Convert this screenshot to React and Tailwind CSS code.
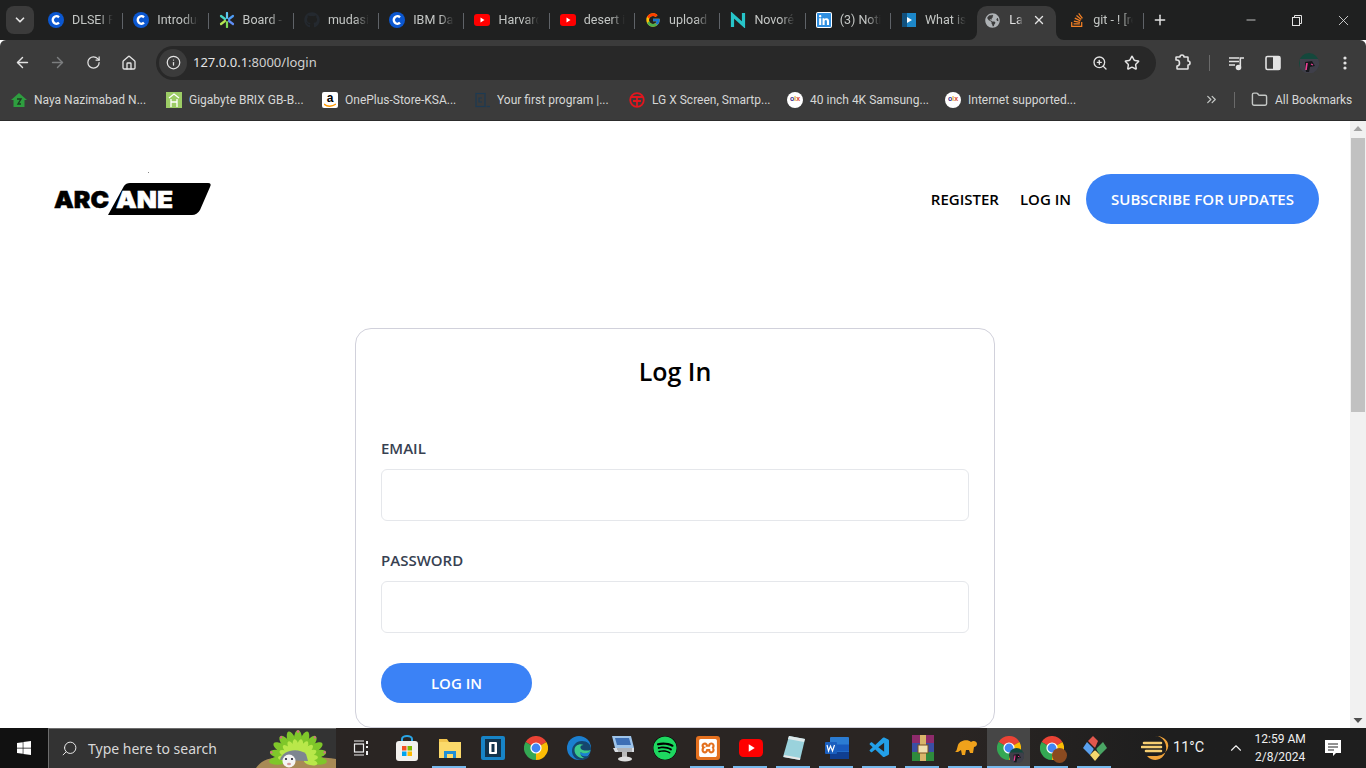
import React from "react";
import { ArrowLeft, ArrowRight, RotateCw, Home, Info, ZoomIn, Star, ChevronDown, X, Plus, Minus, ChevronsRight, Folder, Search, ChevronUp } from "lucide-react";
import { FcGoogle } from "react-icons/fc";
import { FaGithub, FaLinkedin, FaStackOverflow, FaWindows, FaSpotify, FaGlobeAmericas } from "react-icons/fa";
import { SiXampp } from "react-icons/si";
import { VscVscode } from "react-icons/vsc";

const CIcon = () => (
  <svg width="16" height="16" viewBox="0 0 16 16"><circle cx="8" cy="8" r="8" fill="#0b57d0" /><path d="M11 5.3A3.7 3.7 0 1 0 11 10.7" fill="none" stroke="#fff" strokeWidth="2.4" /></svg>
);
const Yt = ({ s = 16 }) => (
  <svg width={s} height={s} viewBox="0 0 16 16"><rect x="0" y="2" width="16" height="12" rx="3" fill="#f00" /><path d="M6.5 5.5v5l4-2.5z" fill="#fff" /></svg>
);
const Spark = () => (
  <svg width="16" height="16" viewBox="0 0 16 16" strokeWidth="2.2" strokeLinecap="round">
    <path d="M8 1v5" stroke="#5ec8f2" /><path d="M8 10v5" stroke="#7ed957" /><path d="M2 4l4 3" stroke="#46d7c5" /><path d="M10 9l4 3" stroke="#5f8df5" /><path d="M14 4l-4 3" stroke="#4f9df7" /><path d="M6 9l-4 3" stroke="#b5e853" />
  </svg>
);
const Novo = () => (
  <svg width="16" height="16" viewBox="0 0 16 16" fill="none" stroke="#27c5c9" strokeWidth="3.2"><path d="M2.5 15V3l11 10V1" /></svg>
);
const Play = () => (
  <svg width="16" height="16" viewBox="0 0 16 16"><rect x="1" y="1" width="14" height="14" fill="#1c87c9" /><rect x="1" y="1" width="5" height="14" fill="#12507c" /><path d="M6 5v6l5-3z" fill="#fff" /></svg>
);

const Tab = ({ icon, text, last }) => (
  <div className="w-[85.3px] h-[34px] flex items-center shrink-0 relative">
    <div className="w-[16px] h-[16px] ml-[10px] shrink-0 flex items-center justify-center">{icon}</div>
    <span className="ml-[8px] w-[41px] pt-[1px] overflow-hidden whitespace-nowrap text-[12.5px] text-[#c4c7c5] [mask-image:linear-gradient(to_right,black_65%,transparent)]">{text}</span>
    {!last && <div className="absolute right-0 top-[10px] w-px h-[16px] bg-[#5f6368]" />}
  </div>
);

const tabs = [
  [<CIcon />, "DLSEI Professional"],
  [<CIcon />, "Introduction"],
  [<Spark />, "Board - Trello"],
  [<FaGithub size={16} color="#24292f" />, "mudasir"],
  [<CIcon />, "IBM Data"],
  [<Yt />, "Harvard CS"],
  [<Yt />, "desert in"],
  [<FcGoogle size={16} />, "upload"],
  [<Novo />, "Novorésumé"],
  [<FaLinkedin size={16} color="#2f8fe0" className="bg-white rounded-[2px]" />, "(3) Notifications"],
  [<Play />, "What is a"],
];

const Mark = ({ bg, children }) => (
  <div className={"w-[16px] h-[16px] flex items-center justify-center shrink-0 " + bg}>{children}</div>
);
const Olx = () => (
  <div className="w-[16px] h-[16px] rounded-full bg-white flex items-center justify-center shrink-0 text-[7px] font-bold text-[#3a2d8f] font-['Liberation_Sans',sans-serif]">
    o<span className="text-[#e6a817]">l</span><span className="text-[#d6442a]">x</span>
  </div>
);
const bookmarks = [
  [155, <svg width="16" height="16" viewBox="0 0 16 16"><path d="M8 1L0 8h2.5v7h11V8H16z" fill="#2e9e3f" /><path d="M6 7h4L7 12h3" fill="none" stroke="#1c3b22" strokeWidth="1.4" /></svg>, "Naya Nazimabad N..."],
  [156, <Mark bg="bg-[#9ccc65]"><svg width="12" height="14" viewBox="0 0 12 14" fill="none" stroke="#fff" strokeWidth="1.3"><path d="M1 5l5-4 5 4M3 14V6M9 14V6M3 9h6" /></svg></Mark>, "Gigabyte BRIX GB-B..."],
  [152, <Mark bg="bg-white rounded-[2px]"><div className="relative w-[16px] h-[16px] flex justify-center"><span className="text-[12px] leading-[12px] font-bold text-black font-['Liberation_Sans',sans-serif]">a</span><svg className="absolute left-[2px] bottom-0" width="12" height="5" viewBox="0 0 12 5" fill="none" stroke="#f90" strokeWidth="1.4"><path d="M0 1c3 3 8 3 12 0" /></svg></div></Mark>, "OnePlus-Store-KSA..."],
  [155, <svg width="16" height="16" viewBox="0 0 16 16" fill="none" stroke="#1d3a52" strokeWidth="1.2"><rect x="2" y="1.5" width="9" height="13" /><path d="M12.5 14.5H16" /><path d="M8 6H5v4h3" /></svg>, "Your first program |..."],
  [158, <svg width="16" height="16" viewBox="0 0 16 16" fill="none" stroke="#e0161e" strokeWidth="1.8"><circle cx="8" cy="8" r="6.8" /><path d="M2 5h12M8 5v10M4 9h8" /></svg>, "LG X Screen, Smartp..."],
  [158, <Olx />, "40 inch 4K Samsung..."],
  [260, <Olx />, "Internet supported..."],
];

const ChromeIcon = ({ s = 24 }) => (
  <svg width={s} height={s} viewBox="0 0 24 24">
    <path d="M12 12L1.6 6A12 12 0 0 1 22.4 6z" fill="#ea4335" />
    <path d="M12 12L22.4 6A12 12 0 0 1 12 24z" fill="#fbbc04" />
    <path d="M12 12L12 24A12 12 0 0 1 1.6 6z" fill="#34a853" />
    <circle cx="12" cy="12" r="5.6" fill="#fff" /><circle cx="12" cy="12" r="4.4" fill="#4285f4" />
  </svg>
);

const Store = () => (
  <svg width="24" height="26" viewBox="0 0 24 26"><path d="M7 7V4a5 3 0 0 1 10 0v3" fill="none" stroke="#2aa5e5" strokeWidth="2" /><rect x="1" y="6" width="22" height="20" rx="3" fill="#f3f1ee" /><rect x="7" y="11" width="4.5" height="4.5" fill="#f25022" /><rect x="12.5" y="11" width="4.5" height="4.5" fill="#7fba00" /><rect x="7" y="16.5" width="4.5" height="4.5" fill="#00a4ef" /><rect x="12.5" y="16.5" width="4.5" height="4.5" fill="#ffb900" /></svg>
);
const Explorer = () => (
  <svg width="24" height="24" viewBox="0 0 24 24"><path d="M1 3h8l2 3h12v16H1z" fill="#f2c44d" /><rect x="1" y="6" width="22" height="16" fill="#fbd96a" /><path d="M6 22v-7h12v7h-3v-4H9v4z" fill="#1f8fd6" /></svg>
);
const Bracket = () => (
  <svg width="24" height="24" viewBox="0 0 24 24"><rect width="24" height="24" rx="2" fill="#1784c7" /><rect x="4" y="3" width="16" height="18" fill="#12344d" /><rect x="8" y="6" width="8" height="12" rx="1" fill="#fff" /><rect x="10.5" y="8" width="3" height="8" fill="#12344d" /></svg>
);
const Edge = () => (
  <svg width="24" height="24" viewBox="0 0 24 24"><circle cx="12" cy="12" r="12" fill="#1b7fd0" /><path d="M24 13c0-5-4-8-9-8-6 0-10 5-10 10 0 5 4 9 9 9 4 0 8-2 9-5-3 2-10 2-11-3 4 1 12 2 12-3z" fill="#15466e" /><path d="M23.5 14c-3 1-9 1-10-2-.5-2 1-3 3-3-3-2-9 0-9 5 0 5 5 9 10 8-3-1-5-4-4-6 3 2 9 2 10-2z" fill="#3cc98b" /></svg>
);
const Network = () => (
  <svg width="26" height="28" viewBox="0 0 26 28"><path d="M3 2h19l3 12H6z" fill="#9ec4ea" /><path d="M6 4h14l2 7H8z" fill="#3d6fb5" /><path d="M4 14h21v4H6z" fill="#d9dde3" /><path d="M8 15h15M9 17h14" stroke="#666" strokeWidth=".7" /><rect x="13" y="18" width="5" height="5" fill="#bbb" /><ellipse cx="16" cy="25" rx="7" ry="2.4" fill="#ddd" /></svg>
);
const Notepad = () => (
  <svg width="22" height="26" viewBox="0 0 22 26"><path d="M6 1l16 3-5 21-17-3z" fill="#9ad2dc" /><path d="M6 1l16 3-1 3L5 4z" fill="#dfe9ea" /><path d="M1 21l16 3" stroke="#e8e8e8" strokeWidth="2" /></svg>
);
const Word = () => (
  <svg width="24" height="24" viewBox="0 0 24 24"><rect x="5" y="1" width="19" height="22" rx="1" fill="#2b7cd3" /><rect x="5" y="8.5" width="19" height="7" fill="#185abd" /><rect x="5" y="16" width="19" height="7" fill="#103f91" /><rect x="0" y="6" width="12" height="12" rx="1" fill="#1a5fbf" /><path d="M2 9l1.5 6 2-5 2 5L9.5 9" fill="none" stroke="#fff" strokeWidth="1.2" /></svg>
);
const Rar = () => (
  <svg width="22" height="26" viewBox="0 0 22 26"><rect x="0" y="0" width="22" height="8" fill="#8e2b6b" /><rect x="0" y="8" width="22" height="9" fill="#3a4ea5" /><rect x="0" y="17" width="22" height="9" fill="#2e8b3d" /><rect x="8" y="0" width="6" height="26" fill="#d9b56a" /><rect x="6" y="10" width="10" height="8" fill="#f0e0b0" stroke="#7a5020" /></svg>
);
const Elephant = () => (
  <svg width="24" height="22" viewBox="0 0 24 22"><path d="M4 8c2-5 10-6 13-3 2-2 6-1 6 2 0 2-2 3-3 3l-1 6h-3l-1-3h-3l-1 5H8l-1-5-3 2-3 0c2-1 2-4 3-7z" fill="#f0a21b" /></svg>
);
const Git = () => (
  <svg width="24" height="28" viewBox="0 0 24 28"><path d="M12 14L5 7l5-5 5 5z" fill="#e0574d" /><path d="M11 15l-7-7-4 6 7 7z" fill="#5aa0ee" /><path d="M13 15l7-7 4 6-7 7z" fill="#4aa564" /><path d="M7 21l5-5 5 5-5 6z" fill="#f5d76e" /><circle cx="12" cy="15" r="1.5" fill="#222" /></svg>
);
const Weather = () => (
  <svg width="28" height="28" viewBox="0 0 28 28"><path d="M14 2a11 12 0 1 1-8 20h10a11 9 0 0 0-2-20z" fill="#f0a33a" /><path d="M3 9h17M1 13h19M5 17h15" stroke="#f6cf72" strokeWidth="2.6" strokeLinecap="round" /></svg>
);
const Avatar = ({ s = 20 }) => (
  <svg width={s} height={s} viewBox="0 0 20 20"><circle cx="10" cy="10" r="10" fill="#14483c" /><path d="M1 6h18a10 10 0 0 1-18 9z" fill="#3f3f4a" /><path d="M6 9l7-1 3 5-5 1-1 5H7z" fill="#17171c" /><path d="M8 10l-1 7" stroke="#ef3f96" strokeWidth="1.6" /><path d="M12 11l2 1" stroke="#ef3f96" strokeWidth="1.2" /></svg>
);

const feathers = [-95, -76, -57, -38, -19, 0, 19, 38, 57, 76, 95];
const Peacock = () => (
  <svg width="80" height="40" viewBox="0 0 80 40" className="absolute right-0 bottom-0">
    <path d="M0 40c6-9 16-11 30-11h26c10 0 18 1 24 2v9z" fill="#a88a55" />
    {feathers.map((a) => (
      <ellipse key={a} cx="42" cy="11" rx="4" ry="9" fill="#7fc72a" transform={`rotate(${a} 42 31)`} />
    ))}
    {feathers.map((a) => (
      <ellipse key={"i" + a} cx="42" cy="18" rx="3" ry="7" fill="#b9e84a" transform={`rotate(${a + 9} 42 31)`} />
    ))}
    {feathers.filter((_, i) => i % 2 === 1).map((a) => (
      <circle key={"d" + a} cx="42" cy="3.5" r="1.2" fill="#d8688a" transform={`rotate(${a} 42 31)`} />
    ))}
    <path d="M24 32c2-10 18-13 26-6l2 7z" fill="#7d8590" />
    <ellipse cx="33" cy="33" rx="6.5" ry="6.5" fill="#f4f4f4" />
    <circle cx="30" cy="31" r="1.1" fill="#223" /><circle cx="36" cy="31" r="1.1" fill="#223" />
    <ellipse cx="33" cy="36" rx="2" ry="1.2" fill="#d59a9a" />
  </svg>
);

const TaskCell = ({ children, run, active }) => (
  <div className={"relative w-[43px] h-full flex items-center justify-center shrink-0 " + (active ? "bg-[#464646]" : "")}>
    {children}
    {run && <div className={"absolute bottom-0 h-[2px] bg-[#76b9ed] " + (active ? "left-0 right-0" : "left-[4px] right-[5px]")} />}
  </div>
);

export default function App() {
  return (
    <div className="w-[1366px] h-[768px] flex flex-col overflow-hidden bg-white font-['Open_Sans',sans-serif]">
      {/* tab strip */}
      <div className="h-[40px] bg-[#1f2020] flex items-start shrink-0 font-['Roboto',sans-serif]">
        <div className="ml-[6px] mt-[6px] w-[28px] h-[28px] rounded-lg bg-[#3b3b3b] flex items-center justify-center"><ChevronDown size={14} color="#e3e3e3" strokeWidth={3} /></div>
        <div className="flex items-start mt-[3px] ml-[4px]">
          {tabs.map(([ic, t], i) => <Tab key={i} icon={ic} text={t} last={i === tabs.length - 1} />)}
        </div>
        <div className="relative self-end ml-[1px] h-[34px] pb-[6px] w-[79px] bg-[#3b3b3b] rounded-t-[10px] flex items-center shrink-0">
          <svg width="8" height="8" viewBox="0 0 8 8" className="absolute -left-[8px] bottom-0"><path d="M8 0V8H0A8 8 0 0 0 8 0z" fill="#3b3b3b" /></svg>
          <svg width="8" height="8" viewBox="0 0 8 8" className="absolute -right-[8px] bottom-0"><path d="M0 0V8H8A8 8 0 0 1 0 0z" fill="#3b3b3b" /></svg>
          <FaGlobeAmericas size={15} color="#aeb2b5" className="ml-[8px]" />
          <span className="ml-[9px] w-[14px] overflow-hidden whitespace-nowrap text-[12.5px] text-[#e3e3e3] [mask-image:linear-gradient(to_right,black_60%,transparent)]">Laravel</span>
          <X size={14} color="#e3e3e3" strokeWidth={2.4} className="ml-[9px]" />
        </div>
        <div className="w-[88px] h-[34px] mt-[3px] flex items-center shrink-0 relative">
          <FaStackOverflow size={16} color="#f48024" className="ml-[13px]" />
          <span className="ml-[8px] w-[40px] pt-[1px] overflow-hidden whitespace-nowrap text-[12.5px] text-[#c4c7c5] [mask-image:linear-gradient(to_right,black_70%,transparent)]">git - ! [rejected]</span>
          <div className="absolute right-0 top-[10px] w-px h-[16px] bg-[#5f6368]" />
        </div>
        <Plus size={16} color="#e3e3e3" strokeWidth={2.2} className="ml-[8px] mt-[12px]" />
        <div className="ml-auto flex h-[40px] items-center">
          <div className="w-[46px] flex justify-center"><Minus size={14} color="#e3e3e3" strokeWidth={1.4} /></div>
          <div className="w-[46px] flex justify-center"><svg width="12" height="12" viewBox="0 0 12 12" fill="none" stroke="#e3e3e3"><rect x="1.5" y="3.5" width="7" height="8" /><path d="M3.5 3.5v-2h7v8h-2" /></svg></div>
          <div className="w-[46px] flex justify-center"><X size={17} color="#e3e3e3" strokeWidth={1.2} /></div>
        </div>
      </div>

      {/* toolbar */}
      <div className="h-[40px] pt-[5px] bg-[#3b3b3b] rounded-t-[6px] flex items-center shrink-0 font-['Noto_Sans',sans-serif]">
        <div className="flex items-center w-[156px] shrink-0">
          <ArrowLeft size={17} color="#e3e3e3" className="ml-[14px]" />
          <ArrowRight size={17} color="#7c7e7f" className="ml-[18px]" />
          <RotateCw size={15} color="#e3e3e3" className="ml-[20px]" />
          <Home size={16} color="#e3e3e3" className="ml-[20px]" />
        </div>
        <div className="w-[1000px] h-[34px] rounded-full bg-[#282828] flex items-center shrink-0">
          <div className="ml-[3px] w-[28px] h-[28px] rounded-full bg-[#3b3b3b] flex items-center justify-center"><Info size={15} color="#e3e3e3" /></div>
          <span className="ml-[6px] text-[13px] text-[#e3e3e3]">127.0.0.1<span className="text-[#d0d0d0]">:8000/login</span></span>
          <ZoomIn size={16} color="#e3e3e3" className="ml-auto" />
          <Star size={16} color="#e3e3e3" strokeWidth={2.2} className="ml-[16px] mr-[16px]" />
        </div>
        <svg width="18" height="18" viewBox="0 0 18 18" fill="none" stroke="#e3e3e3" strokeWidth="1.6" strokeLinejoin="round" className="ml-[18px]">
          <path d="M2 6V3.5Q2 3 2.5 3H6a2 2 0 0 1 4 0h3.5Q14 3 14 3.5V7a2 2 0 0 1 0 4v3.5q0 .5-.5.5H3.5Q3 15 3 14.5V12a2.5 3 0 0 0 0-6z" />
        </svg>
        <div className="ml-[17px] w-px h-[16px] bg-[#6a6a6a]" />
        <svg width="16" height="16" viewBox="0 0 16 16" fill="none" stroke="#e3e3e3" strokeWidth="1.6" className="ml-[19px]">
          <path d="M0 3h10M0 6.5h10M0 10h6" /><circle cx="9.5" cy="12.5" r="2" fill="#e3e3e3" /><path d="M11.3 12.5V3H15" />
        </svg>
        <svg width="16" height="16" viewBox="0 0 16 16" className="ml-[20px]" fill="none"><rect x="1" y="1.5" width="14" height="13" rx="1.5" stroke="#e3e3e3" strokeWidth="1.6" /><rect x="8" y="1.5" width="7" height="13" fill="#e3e3e3" /></svg>
        <div className="ml-[18px]"><Avatar /></div>
        <svg width="4" height="16" viewBox="0 0 4 16" className="ml-[24px]" fill="#e3e3e3"><circle cx="2" cy="3" r="1.6" /><circle cx="2" cy="8" r="1.6" /><circle cx="2" cy="13" r="1.6" /></svg>
      </div>

      {/* bookmarks */}
      <div className="h-[41px] pb-[1px] bg-[#3b3b3b] flex items-center shrink-0 pl-[11px] border-b border-[#2c2c2c] font-['Roboto',sans-serif]">
        {bookmarks.map(([w, ic, t], i) => (
          <div key={i} className="flex items-center shrink-0" style={{ width: w }}>
            {ic}
            <span className="ml-[7px] text-[12px] text-[#d6d7d6] whitespace-nowrap">{t}</span>
          </div>
        ))}
        <ChevronsRight size={15} color="#c4c7c5" className="ml-[-1px]" />
        <div className="ml-[15px] w-px h-[16px] bg-[#6a6a6a]" />
        <Folder size={17} color="#c4c7c5" className="ml-[16px]" />
        <span className="ml-[7px] text-[12px] text-[#d6d7d6] whitespace-nowrap">All Bookmarks</span>
      </div>

      {/* page */}
      <div className="flex-1 min-h-0 flex overflow-hidden">
        <main className="flex-1 min-w-0">
          <nav className="flex items-center pl-[54px] pr-[31px] pt-[53px]">
            <svg width="158" height="34" viewBox="0 0 158 34" className="shrink-0 overflow-visible">
              <rect x="94" y="-10" width="1" height="1" fill="#888" />
              <path d="M54 33L70 4Q72 1 76 1H154Q158 1 156 5L146 28Q143 33 138 33z" fill="#000" />
              <text x="0" y="26" fontFamily="Inter, sans-serif" fontWeight="900" fontSize="23" fill="#000" stroke="#000" strokeWidth=".5" textLength="55" lengthAdjust="spacingAndGlyphs">ARC</text>
              <text x="62" y="26" fontFamily="Inter, sans-serif" fontWeight="900" fontSize="23" fill="#fff" stroke="#fff" strokeWidth=".5" textLength="57" lengthAdjust="spacingAndGlyphs">ANE</text>
            </svg>
            <div className="ml-auto flex items-center">
              <a className="text-[15px] font-semibold text-black">REGISTER</a>
              <a className="ml-[21px] text-[15px] font-semibold text-black">LOG IN</a>
              <button className="ml-[15px] w-[233px] h-[50px] rounded-full bg-[#3b82f6] text-white text-[15px] font-semibold">SUBSCRIBE FOR UPDATES</button>
            </div>
          </nav>
          <section className="w-[640px] mx-auto mt-[104px] border border-[#d1d1db] rounded-2xl px-[25px] pt-[22px] pb-[24px]">
            <h1 className="text-center text-[25px] leading-[40px] font-semibold text-black">Log In</h1>
            <label className="block mt-[47px] text-[15px] leading-[20px] font-semibold text-[#374151]">EMAIL</label>
            <div className="mt-[11px] h-[52px] border border-[#e5e7eb] rounded-md" />
            <label className="block mt-[29px] text-[15px] leading-[20px] font-semibold text-[#374151]">PASSWORD</label>
            <div className="mt-[11px] h-[52px] border border-[#e5e7eb] rounded-md" />
            <button className="block mt-[30px] w-[151px] h-[40px] rounded-full bg-[#3b82f6] text-white text-[15px] font-semibold">LOG IN</button>
          </section>
        </main>
        <div className="w-[16px] bg-[#f1f1f1] flex flex-col items-center shrink-0">
          <svg width="16" height="17" viewBox="0 0 16 17" className="shrink-0"><path d="M8 5l4.5 5h-9z" fill="#a3a3a3" /></svg>
          <div className="w-[14px] h-[274px] bg-[#c1c1c1]" />
          <svg width="16" height="17" viewBox="0 0 16 17" className="mt-auto shrink-0"><path d="M8 12l4.5-5h-9z" fill="#505050" /></svg>
        </div>
      </div>

      {/* taskbar */}
      <div className="h-[40px] bg-gradient-to-r from-[#2a2523] from-70% to-[#1e1e1e] to-85% flex items-center shrink-0 font-['Roboto',sans-serif]">
        <div className="w-[48px] h-full bg-[#111111] flex items-center justify-center shrink-0"><FaWindows size={16} color="#fff" /></div>
        <div className="w-[288px] h-full bg-[#333333] border-t border-l border-[#6d6d6d] flex items-center relative overflow-hidden shrink-0">
          <Search size={17} color="#e8e8e8" strokeWidth={1.4} className="ml-[12px] -scale-x-100" />
          <span className="ml-[10px] text-[14px] text-[#d8d8d8] font-['Noto_Sans',sans-serif]">Type here to search</span>
          <Peacock />
        </div>
        <div className="w-[49px] flex justify-center shrink-0">
          <svg width="16" height="16" viewBox="0 0 16 16" fill="none" stroke="#f0f0f0" strokeWidth="1.2"><path d="M1 1h10M1 15h10" /><rect x="1.5" y="4" width="9" height="8" /><path d="M14 1v3M14 6v2M14 11v4" strokeWidth="2" /></svg>
        </div>
        <TaskCell><Store /></TaskCell>
        <TaskCell run><Explorer /></TaskCell>
        <TaskCell><Bracket /></TaskCell>
        <TaskCell><ChromeIcon /></TaskCell>
        <TaskCell><Edge /></TaskCell>
        <TaskCell><Network /></TaskCell>
        <TaskCell><FaSpotify size={24} color="#1ed760" className="bg-black rounded-full" /></TaskCell>
        <TaskCell run><div className="w-[24px] h-[24px] rounded-[3px] bg-[#e4701e] flex items-center justify-center"><SiXampp size={18} color="#fff" /></div></TaskCell>
        <TaskCell run><Yt s={24} /></TaskCell>
        <TaskCell run><Notepad /></TaskCell>
        <TaskCell run><Word /></TaskCell>
        <TaskCell run><VscVscode size={24} color="#23a0e8" /></TaskCell>
        <TaskCell run><Rar /></TaskCell>
        <TaskCell run><Elephant /></TaskCell>
        <TaskCell run active>
          <div className="relative"><ChromeIcon /><div className="absolute -right-[3px] -bottom-[3px]"><Avatar s={15} /></div></div>
        </TaskCell>
        <TaskCell run>
          <div className="relative"><ChromeIcon /><div className="absolute -right-[3px] -bottom-[3px] w-[15px] h-[15px] rounded-full bg-[#8a4a20]" /></div>
        </TaskCell>
        <TaskCell run><Git /></TaskCell>
        <div className="ml-[25px] shrink-0"><Weather /></div>
        <span className="ml-[4px] text-[14.5px] text-[#f0f0f0]">11°C</span>
        <ChevronUp size={18} color="#f0f0f0" strokeWidth={1.5} className="ml-[23px]" />
        <div className="ml-[3px] w-[64px] flex flex-col items-center text-[12px] leading-[18px] text-[#f0f0f0] whitespace-nowrap">
          <span>12:59 AM</span>
          <span>2/8/2024</span>
        </div>
        <svg width="16" height="16" viewBox="0 0 16 16" className="ml-[13px]"><path d="M0 0h16v13h-5l-3 3v-3H0z" fill="#fff" /><path d="M3 4h10M3 7h10M3 10h6" stroke="#222" strokeWidth="1" /></svg>
      </div>
    </div>
  );
}
